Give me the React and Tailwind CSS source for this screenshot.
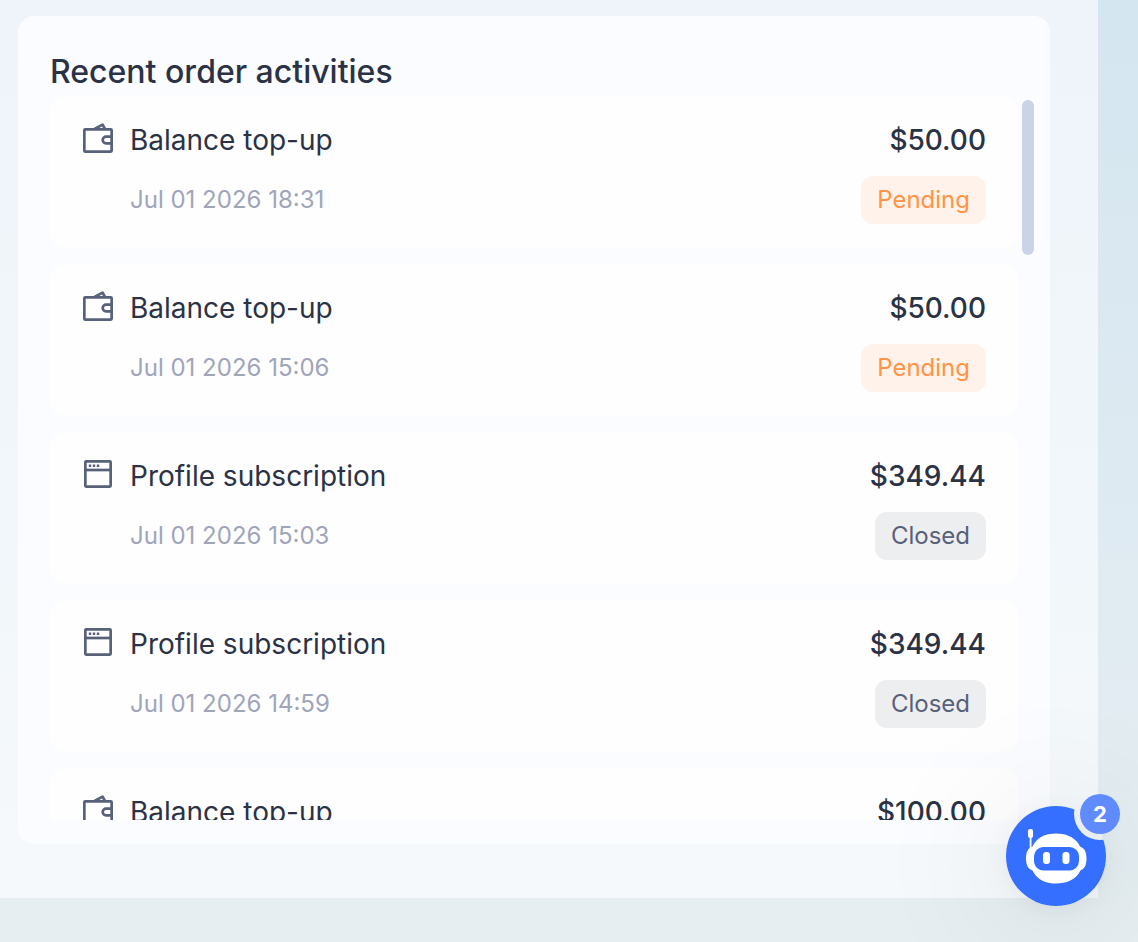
import React from "react";

const orders = [
  { type: "topup", title: "Balance top-up", date: "Jul 01 2026 18:31", amount: "$50.00", status: "Pending" },
  { type: "topup", title: "Balance top-up", date: "Jul 01 2026 15:06", amount: "$50.00", status: "Pending" },
  { type: "profile", title: "Profile subscription", date: "Jul 01 2026 15:03", amount: "$349.44", status: "Closed" },
  { type: "profile", title: "Profile subscription", date: "Jul 01 2026 14:59", amount: "$349.44", status: "Closed" },
  { type: "topup", title: "Balance top-up", date: "Jul 01 2026 14:52", amount: "$100.00", status: "Closed" },
];

const statusStyles = {
  Pending: "bg-[#fff2ea] text-[#ff9447]",
  Closed: "bg-[#edeef0] text-[#58617a]",
};

function WalletIcon() {
  return (
    <svg viewBox="0 0 32 32" className="size-8 shrink-0 text-[#58617a]" fill="none" stroke="currentColor" strokeWidth="2.7" strokeLinejoin="round" aria-hidden="true">
      <rect x="2.35" y="7.35" width="27.3" height="22.3" rx="0.8" />
      <path d="M12.5 7 20.600 2.600 23 7" />
      <path d="M29.500 14.700h-5.500a3.300 3.300 0 0 0 0 6.600h5.500" />
    </svg>
  );
}

function BrowserIcon() {
  return (
    <svg viewBox="0 0 32 32" className="size-8 shrink-0 text-[#58617a]" fill="none" stroke="currentColor" strokeWidth="2.7" strokeLinejoin="round" aria-hidden="true">
      <rect x="3.35" y="3.35" width="25.3" height="25.3" rx="0.8" />
      <path d="M3 12h26" />
      <path d="M6.800 7.800h2.400M10.800 7.800h2.400M14.800 7.800h2.400" strokeWidth="2.4" />
    </svg>
  );
}

function OrderRow({ order }) {
  return (
    <li className="flex shrink-0 gap-4 rounded-2xl bg-white/80 px-8 py-6">
      <div className="flex h-9 items-center">
        {order.type === "topup" ? <WalletIcon /> : <BrowserIcon />}
      </div>
      <div className="flex min-w-0 flex-1 flex-col gap-4">
        <div className="flex justify-between text-[28px] leading-10 text-[#2b3245]">
          <span>{order.title}</span>
          <span className="font-medium">{order.amount}</span>
        </div>
        <div className="flex items-center justify-between text-2xl leading-8">
          <time className="text-[#a0a5b9]">{order.date}</time>
          <span className={`rounded-xl px-4 py-2 ${statusStyles[order.status]}`}>{order.status}</span>
        </div>
      </div>
    </li>
  );
}

function ChatButton() {
  return (
    <button type="button" aria-label="Open chat, 2 unread messages" className="fixed right-8 bottom-9 size-[100px] rounded-full bg-[#eaeef0] shadow-[0_4px_32px_rgba(0,0,0,0.06),0_8px_140px_16px_rgba(0,0,0,0.08)]">
      <svg viewBox="0 0 100 100" className="size-full" aria-hidden="true">
        <defs>
          <mask id="notch">
            <rect width="100" height="100" fill="#fff" />
            <circle cx="94" cy="8" r="26" fill="#000" />
          </mask>
        </defs>
        <circle cx="50" cy="50" r="50" fill="#356fff" mask="url(#notch)" />
        <g fill="#fff">
          <rect x="22" y="23" width="5" height="9" rx="2" />
          <rect x="23.7" y="30" width="1.8" height="16" />
          <path d="M26.5 40.5C31 31 40 27.5 50 27.5S69.500 31 74 40.500C78 42 80.500 45 80.500 52.500S78 63 74.500 64.500C70 74 60 77.500 50 77.500S31 74 26.500 64.500C22.500 63 20 60 20 52.500S22.500 42 26.500 40.500Z" />
        </g>
        <rect x="28" y="41" width="45" height="23.500" rx="9.500" fill="#356fff" />
        <rect x="37" y="46" width="7" height="12" rx="3.200" fill="#fff" />
        <rect x="56.500" y="46" width="7" height="12" rx="3.200" fill="#fff" />
      </svg>
      <span className="absolute -top-3 -right-[14px] flex size-10 items-center justify-center rounded-full bg-[#608bff] text-[22px] font-bold text-white">2</span>
    </button>
  );
}

export default function App() {
  return (
    <div className="flex h-screen overflow-hidden bg-linear-to-b from-[#d4e6f0] via-[#deeaf2] to-[#e6eef1] pr-10 pb-11 font-['Inter',sans-serif]">
      <main className="flex min-w-0 flex-1 bg-linear-to-b from-[#eef4fa] to-[#f5f9fb] pt-4 pr-12 pb-[54px] pl-[18px]">
        <section className="relative flex min-w-0 flex-1 flex-col rounded-2xl bg-[#fbfcff] px-8 pt-8 pb-6">
          <h2 className="text-[32px] leading-12 font-medium text-[#2b3245]">Recent order activities</h2>
          <ul className="flex min-h-0 flex-1 flex-col gap-4 overflow-y-auto [scrollbar-width:none]">
            {orders.map((order) => (
              <OrderRow key={order.date} order={order} />
            ))}
          </ul>
          <div className="absolute top-[84px] right-4 h-[155px] w-3 rounded-full bg-[#cad3e7]" />
        </section>
      </main>
      <ChatButton />
    </div>
  );
}
